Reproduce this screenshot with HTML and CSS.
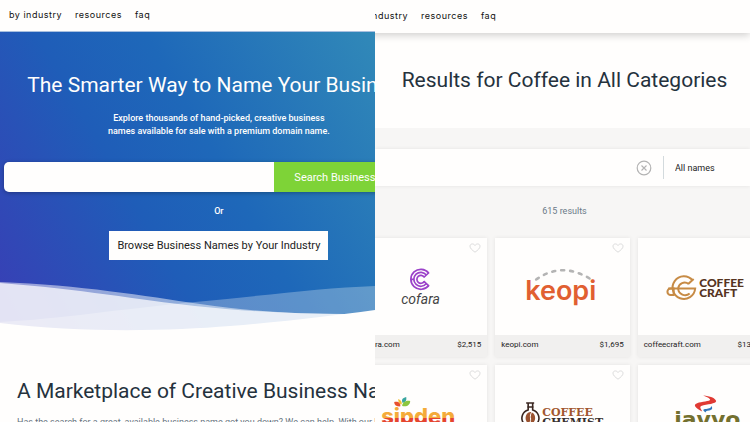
FILE: index.html
```html
<!DOCTYPE html>
<html lang="en">
  <head>
    <meta charset="UTF-8" />
    <meta name="viewport" content="width=device-width, initial-scale=1.0" />
    <title>Business Names</title>
    <link rel="stylesheet" href="styles.css">
  </head>
  <body>
    <div class="split">
      <section class="panel home">
        <nav class="nav">
          <a href="#">by industry</a>
          <a href="#">resources</a>
          <a href="#">faq</a>
        </nav>
        <div class="hero">
          <div class="hero-inner">
            <h1 class="title">The Smarter Way to Name Your Business</h1>
            <p class="subtitle">Explore thousands of hand-picked, creative business<br>names available for sale with a premium domain name.</p>
            <form class="search">
              <input type="text" aria-label="Search business names" />
              <button type="button">Search Business Names</button>
            </form>
            <p class="or">Or</p>
            <a class="browse" href="#">Browse Business Names by Your Industry</a>
          </div>
          <svg class="waves" viewBox="0 0 375 52" preserveAspectRatio="none" aria-hidden="true">
            <path fill="#fffefd" fill-opacity=".28" d="M0 42C60 39 120 29 195 22S320 8 375 6V52H0Z" />
            <path fill="#fffefd" fill-opacity=".5" d="M0 2C80 5 145 16 200 24S300 34 345 34L375 52H0Z" />
            <path fill="#fffefd" fill-opacity=".72" d="M0 3C80 9 140 20 195 26S300 34 345 34L375 52H0Z" />
            <path fill="#fffefd" d="M0 43C80 53 170 51 230 46S330 36 375 30V52H0Z" />
          </svg>
        </div>
        <div class="about">
          <h2 class="title">A Marketplace of Creative Business Names</h2>
          <p>Has the search for a great, available business name got you down? We can help. With our hand-picked names</p>
        </div>
      </section>

      <section class="panel results">
        <nav class="nav">
          <a href="#">by industry</a>
          <a href="#">resources</a>
          <a href="#">faq</a>
        </nav>
        <h2 class="title">Results for Coffee in All Categories</h2>
        <div class="filters">
          <form class="filter-bar">
            <input type="text" aria-label="Keyword" />
            <button class="clear" type="button" aria-label="Clear">
              <svg width="16" height="16" viewBox="0 0 16 16" fill="none" stroke="#b3b3b3">
                <circle cx="8" cy="8" r="6.8" stroke-width="1.2" />
                <path d="M5.5 5.5l5 5M10.5 5.5l-5 5" stroke-width="1.1" />
              </svg>
            </button>
            <select aria-label="Name type">
              <option>All names</option>
            </select>
          </form>
          <p class="count">615 results</p>
          <div class="cards">
            <article class="card">
              <button class="like" type="button" aria-label="Like"><svg width="12" height="10" viewBox="0 0 12 10"><path d="M6 9.2C3 7 1 5.3 1 3.2 1 .7 4.5 0 6 2.5 7.5 0 11 .7 11 3.2 11 5.3 9 7 6 9.2Z" /></svg></button>
              <svg class="logo" viewBox="0 0 134 97" role="img" aria-label="cofara">
                <g fill="none" stroke="#9b42c9" stroke-width="1.7">
                  <path d="M75.5 35A10 10 0 1 0 75.5 47.6" />
                  <path d="M73.2 37A7 7 0 1 0 73.2 45.6" />
                  <path d="M71 39A4 4 0 1 0 71 43.6" />
                  <path d="M75.9 34.5L70.5 39.5M75.9 48.1L70.5 43.1M57 41.3H61" />
                </g>
                <text class="logo-cofara" x="48" y="66">cofara</text>
              </svg>
              <div class="card-info"><a href="#">cofara.com</a><span>$2,515</span></div>
            </article>
            <article class="card">
              <button class="like" type="button" aria-label="Like"><svg width="12" height="10" viewBox="0 0 12 10"><path d="M6 9.2C3 7 1 5.3 1 3.2 1 .7 4.5 0 6 2.5 7.5 0 11 .7 11 3.2 11 5.3 9 7 6 9.2Z" /></svg></button>
              <svg class="logo" viewBox="0 0 134 97" role="img" aria-label="keopi">
                <path d="M41 41.500Q67 23 96 41.500" fill="none" stroke="#b4b4b4" stroke-width="2.600" stroke-dasharray="3 6" stroke-linecap="round" />
                <text class="logo-keopi" x="30" y="62">keopi</text>
              </svg>
              <div class="card-info"><a href="#">keopi.com</a><span>$1,695</span></div>
            </article>
            <article class="card">
              <button class="like" type="button" aria-label="Like"><svg width="12" height="10" viewBox="0 0 12 10"><path d="M6 9.2C3 7 1 5.3 1 3.2 1 .7 4.5 0 6 2.5 7.5 0 11 .7 11 3.2 11 5.3 9 7 6 9.2Z" /></svg></button>
              <svg class="logo" viewBox="0 0 134 97" role="img" aria-label="Coffee Craft">
                <g fill="none" stroke="#c78b45" stroke-width="2">
                  <path d="M54.500 42.500A11.300 11.300 0 1 0 57 50.500H30" />
                  <path d="M50.500 46A6.500 6.500 0 0 0 40 50.500A7 7 0 0 0 51.500 55.500" />
                  <path d="M55.500 41L50 46M35.500 57H32.500A3.200 3.200 0 0 1 32.500 50.500H35.500Z" />
                </g>
                <text class="logo-craft" x="61" y="49">COFFEE</text>
                <text class="logo-craft" x="61" y="59">CRAFT</text>
              </svg>
              <div class="card-info"><a href="#">coffeecraft.com</a><span>$13,750</span></div>
            </article>
            <article class="card">
              <button class="like" type="button" aria-label="Like"><svg width="12" height="10" viewBox="0 0 12 10"><path d="M6 9.2C3 7 1 5.3 1 3.2 1 .7 4.5 0 6 2.5 7.5 0 11 .7 11 3.2 11 5.3 9 7 6 9.2Z" /></svg></button>
              <svg class="logo" viewBox="0 0 134 97" role="img" aria-label="sipden">
                <defs>
                  <linearGradient id="juice" x1="0" y1="0" x2="0" y2="1">
                    <stop offset=".58" stop-color="#f4ab3a" />
                    <stop offset=".58" stop-color="#e5452f" />
                  </linearGradient>
                </defs>
                <path fill="#e8502f" d="M41 37C45 36 48 38 47 41.500 43 41.500 41 40 41 37Z" />
                <path fill="#f4c030" d="M45 34C48 35 49 37 48.500 39.500 46 38.500 45 37 45 34Z" />
                <path fill="#3aa6a0" d="M53 32C49 33 48 35 49.500 38 53 37 53.500 35 53 32Z" />
                <path fill="#8cc63f" d="M57 36C52 35 49 38 49 41 54 42 57 40 57 36Z" />
                <text class="logo-sipden" x="28" y="59" fill="url(#juice)">sipden</text>
              </svg>
              <div class="card-info"><a href="#">sipden.com</a><span>$2,315</span></div>
            </article>
            <article class="card">
              <button class="like" type="button" aria-label="Like"><svg width="12" height="10" viewBox="0 0 12 10"><path d="M6 9.2C3 7 1 5.3 1 3.2 1 .7 4.5 0 6 2.5 7.5 0 11 .7 11 3.2 11 5.3 9 7 6 9.2Z" /></svg></button>
              <svg class="logo" viewBox="0 0 134 97" role="img" aria-label="Coffee Chemist">
                <path d="M31 38H39M33 38V45A8.500 8.500 0 1 0 37.500 45V38M32 42H38.500" fill="none" stroke="#3a2620" stroke-width="1.600" />
                <ellipse cx="35.200" cy="53" rx="4.800" ry="6" fill="#9a5230" />
                <path d="M37 47C33 51 37.500 54 34 59" fill="none" stroke="#fffefd" />
                <text class="logo-chemist" x="47" y="51" fill="#a2572f">COFFEE</text>
                <text class="logo-chemist" x="47" y="61" fill="#38302e">CHEMIST</text>
              </svg>
              <div class="card-info"><a href="#">coffeechemist.com</a><span>$1,995</span></div>
            </article>
            <article class="card">
              <button class="like" type="button" aria-label="Like"><svg width="12" height="10" viewBox="0 0 12 10"><path d="M6 9.2C3 7 1 5.3 1 3.2 1 .7 4.5 0 6 2.5 7.5 0 11 .7 11 3.2 11 5.3 9 7 6 9.2Z" /></svg></button>
              <svg class="logo" viewBox="0 0 134 97" role="img" aria-label="javvo">
                <path fill="#e03a33" d="M65 30.500C72 31 77 33 78 36 78 39 69 39 63 41 61 42 63 44 64 46.500 59 44 55 41 57.500 39 61 36.500 69 37 72 35 72 33 68 32 65 30.500Z" />
                <path fill="#2f75bc" d="M73 41C75 43 74 45 71 45.500 68 46 67 46 68 47.500 65 46 64 44.500 67 44 70 43.800 73 43.500 73 41Z" />
                <text class="logo-javvo" x="36" y="62">javvo</text>
              </svg>
              <div class="card-info"><a href="#">javvo.com</a><span>$3,150</span></div>
            </article>
          </div>
        </div>
      </section>
    </div>
  </body>
</html>
```
FILE: styles.css
```css
* {
  box-sizing: border-box;
}
body {
  margin: 0;
  font-family: Roboto, "Liberation Sans", sans-serif;
  font-size: 9px;
  color: #222;
  background: #fffefd;
}
h1,
h2,
p {
  margin: 0;
}
a {
  color: inherit;
  text-decoration: none;
}
input,
select,
button {
  border: none;
  padding: 0;
  background: none;
  font-family: inherit;
  color: inherit;
}
.split {
  display: grid;
  grid-template-columns: 1fr 1fr;
  height: 100vh;
  overflow: hidden;
}
.panel {
  min-width: 0;
  overflow: hidden;
}
.nav {
  display: flex;
  gap: 13px;
  padding: 7px 9px 9px;
  font-family: Inter, sans-serif;
  font-size: 9px;
  line-height: 15px;
  letter-spacing: 0.5px;
  color: #111;
  white-space: nowrap;
}
.title {
  font-size: 21px;
  font-weight: 400;
  line-height: 28px;
  color: #25323d;
  white-space: nowrap;
}

/* home */
.hero {
  display: flex;
  flex-direction: column;
  gap: 20px;
  border-top: 1px solid #a9c0df;
  background: linear-gradient(60deg, #3a3db5 0%, #1f5db8 38%, #1e68b9 58%, #3189b8 100%);
}
.hero-inner {
  width: 117%;
  padding: 39px 5px 0 4px;
  display: flex;
  flex-direction: column;
  align-items: center;
  color: #fffefd;
}
.hero .title {
  color: #fffefd;
}
.subtitle {
  margin-top: 13px;
  font-weight: 500;
  line-height: 13px;
  text-align: center;
  white-space: nowrap;
}
.search {
  display: flex;
  width: 100%;
  height: 30px;
  margin-top: 24px;
  border-radius: 5px;
  overflow: hidden;
  box-shadow: 0 1px 4px rgba(0, 0, 0, 0.3);
}
.search input {
  flex: 1;
  min-width: 0;
  padding: 0 12px;
  background: #fffefd;
  color: #222;
}
.search button {
  width: 160px;
  background: #7ed337;
  font-size: 11px;
  white-space: nowrap;
}
.or {
  margin: 13px 0;
  font-weight: 500;
  line-height: 13px;
}
.browse {
  padding: 0 8px;
  background: #fffefd;
  color: #222;
  font-size: 11px;
  line-height: 29px;
  white-space: nowrap;
}
.waves {
  display: block;
  width: 100%;
  height: 52px;
}
.about {
  padding: 45px 17px 0;
}
.about p {
  margin-top: 10px;
  line-height: 14px;
  color: #65727e;
  white-space: nowrap;
}

/* results */
.results .nav {
  position: relative;
  margin-left: -29px;
  padding-top: 8px;
  padding-bottom: 10px;
  box-shadow: 0 2px 8px rgba(0, 0, 0, 0.2);
}
.results .title {
  padding: 33px 0 34px 4px;
  text-align: center;
}
.filters {
  padding-top: 21px;
  background: #f7f6f5;
}
.filter-bar {
  display: flex;
  align-items: center;
  height: 37px;
  background: #fffefd;
  box-shadow: 0 0 4px rgba(0, 0, 0, 0.08);
}
.filter-bar input {
  flex: 1;
  min-width: 0;
}
.clear {
  display: flex;
  margin-right: 11px;
}
.filter-bar select {
  width: 87px;
  height: 23px;
  padding-left: 11px;
  border-left: 1px solid #d3dadd;
  appearance: none;
  font-size: 9px;
}
.count {
  padding: 18px 0 20px 4px;
  line-height: 14px;
  text-align: center;
  color: #6b7a88;
}
.cards {
  display: grid;
  grid-template-columns: repeat(3, 1fr);
  gap: 8px;
  margin: 0 -22px;
}
.card {
  position: relative;
  background: #fffefd;
  box-shadow: 0 0 4px rgba(0, 0, 0, 0.08);
}
.like {
  position: absolute;
  top: 5px;
  right: 6px;
  display: flex;
}
.like path {
  fill: none;
  stroke: #dcdcdc;
}
.logo {
  display: block;
  width: 100%;
  height: 97px;
}
.card-info {
  display: flex;
  justify-content: space-between;
  padding: 0 6px 2px;
  background: #f1f0ef;
  font-size: 8px;
  line-height: 20px;
}
.logo-cofara {
  font: italic 14px Roboto, sans-serif;
  fill: #444;
}
.logo-keopi {
  font: 600 27px Inter, sans-serif;
  fill: #e15f31;
}
.logo-craft {
  font: 900 12px Lato, sans-serif;
  fill: #56341f;
}
.logo-sipden {
  font: 800 22px Inter, sans-serif;
}
.logo-chemist {
  font: bold 11px "DejaVu Serif", serif;
}
.logo-javvo {
  font: bold 22px "DejaVu Sans", sans-serif;
  fill: #73702f;
}
```
